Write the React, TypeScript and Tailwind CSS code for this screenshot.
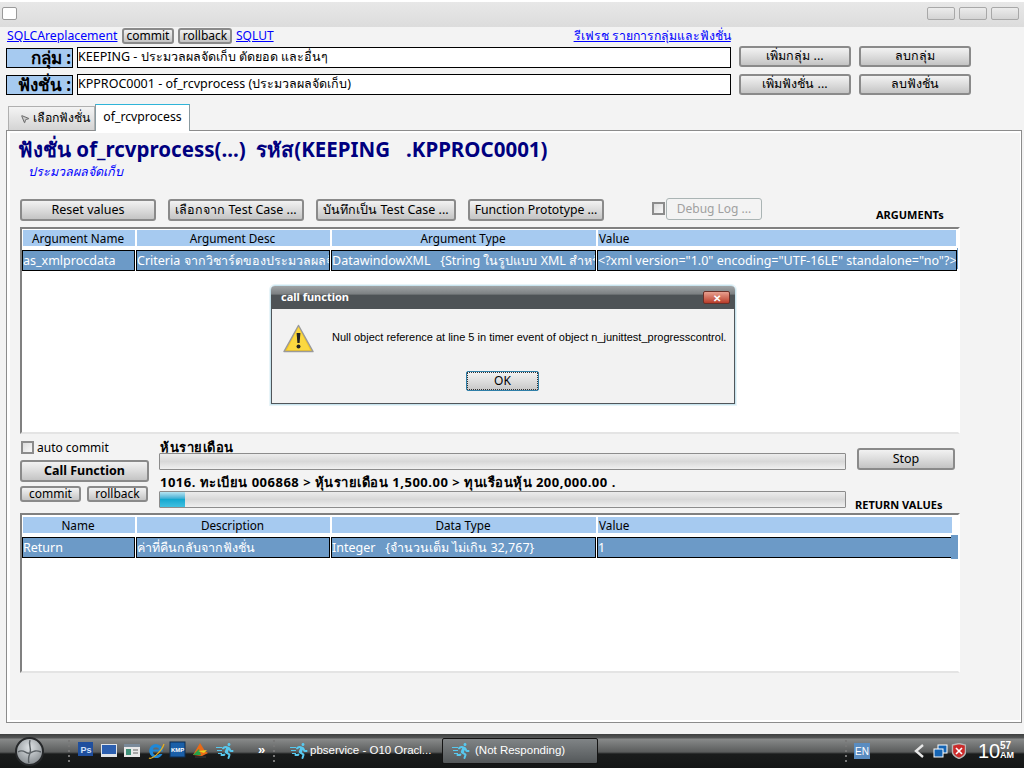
import type { ReactNode } from "react";
import { MousePointer2 } from "lucide-react";
import { FaRunning } from "react-icons/fa";

const Btn = ({ className = "", children }: { className?: string; children: ReactNode }) => (
  <button className={`flex items-center justify-center whitespace-nowrap rounded-[3px] border-2 border-[#8a8a8a] bg-gradient-to-b from-[#f2f2f2] via-[#dcdcdc] to-[#c4c4c4] leading-none text-black ${className}`}>
    {children}
  </button>
);

const Check = ({ className = "" }: { className?: string }) => (
  <span className={`block h-[13px] w-[13px] border-2 border-[#8c8c8c] bg-gradient-to-br from-[#dcdcdc] to-[#f8f8f8] ${className}`} />
);

const Bar = ({ fill = 0 }: { fill?: number }) => (
  <div className="relative h-[17px] w-[687px] overflow-hidden rounded-[1px] border border-[#8c8c8c] bg-gradient-to-b from-[#ececec] via-[#d8d8d8] to-[#f0f0f0]">
    {fill > 0 && (
      <div
        className="h-full bg-gradient-to-b from-[#b5e4f2] via-[#12a8d0] to-[#3fc0e0]"
        style={{ width: fill }}
      />
    )}
  </div>
);

const Head = ({ w, left, children }: { w: string; left?: boolean; children: ReactNode }) => (
  <div className={`flex h-[16px] items-center bg-[#a6caf0] pt-px text-[11.75px] text-black ${left ? "pl-px" : "justify-center pr-[2px]"} ${w}`}>
    {children}
  </div>
);

const Cell = ({ w, children }: { w: string; children: ReactNode }) => (
  <div className={`h-[21px] overflow-hidden whitespace-pre border border-black bg-[#6c9ac7] text-[12.5px] leading-[19px] text-white ${w}`}>
    {children}
  </div>
);

const DataTable = ({
  className,
  heads,
  cells,
  scroll,
}: {
  className: string;
  heads: string[];
  cells: string[];
  scroll?: boolean;
}) => (
  <div className={`relative ml-[10px] w-[940px] shrink-0 border-2 border-b-[#e4e4e4] border-l-[#808080] border-r-[#fff] border-t-[#808080] bg-white pl-[1px] ${className}`}>
    <div className="flex gap-[2px]">
      <Head w="w-[112px]">{heads[0]}</Head>
      <Head w="w-[193px]">{heads[1]}</Head>
      <Head w="w-[264px]">{heads[2]}</Head>
      <Head w={scroll ? "w-[354px]" : "w-[358px]"} left>
        {heads[3]}
      </Head>
    </div>
    <div className="-ml-px mt-[4px] flex gap-[1px] bg-white">
      <Cell w="w-[113px]">{cells[0]}</Cell>
      <Cell w="w-[194px]">{cells[1]}</Cell>
      <Cell w="w-[265px]">{cells[2]}</Cell>
      <Cell w={scroll ? "w-[355px]" : "w-[360px]"}>{cells[3]}</Cell>
    </div>
    {scroll ? (
      <div className="absolute right-0 top-[20px] h-[24px] w-[7px] bg-[#6c9ac7]" />
    ) : (
      <div className="absolute right-0 top-[19px] h-[21px] w-[1px] bg-[#6c9ac7]" />
    )}
  </div>
);

const Runner = ({ className = "" }: { className?: string }) => (
  <span className={`relative block h-[16px] w-[18px] shrink-0 ${className}`}>
    <FaRunning className="absolute right-0 top-0 h-[16px] w-[14px] text-[#58c8ee]" />
    <span className="absolute left-0 top-[4px] h-px w-[6px] bg-[#58c8ee]" />
    <span className="absolute left-[1px] top-[7px] h-px w-[5px] bg-[#58c8ee]" />
    <span className="absolute left-[2px] top-[10px] h-px w-[4px] bg-[#58c8ee]" />
  </span>
);

const Grip = ({ className = "" }: { className?: string }) => (
  <span className={`block h-[22px] w-[2px] shrink-0 bg-[repeating-linear-gradient(to_bottom,#777_0,#777_2px,transparent_2px,transparent_5px)] ${className}`} />
);

export default function App() {
  return (
    <div className="relative flex h-[768px] w-[1024px] flex-col overflow-hidden bg-[#f3f3f3] font-['Tahoma','Noto_Sans',sans-serif] text-black">
      {/* title bar */}
      <div className="flex h-[27px] shrink-0 items-center justify-between border-t-2 border-t-white bg-gradient-to-b from-[#e8e8e8] to-[#dcdcdc] pb-[2px] pl-[2px] pr-[5px]">
        <span className="block h-[13px] w-[15px] rounded-[2px] border border-[#9a9a9a] bg-white" />
        <div className="flex gap-[4px]">
          <span className="block h-[13px] w-[28px] rounded-[2px] border border-[#a8a8a8] bg-gradient-to-b from-[#ececec] to-[#d4d4d4]" />
          <span className="block h-[13px] w-[28px] rounded-[2px] border border-[#a8a8a8] bg-gradient-to-b from-[#ececec] to-[#d4d4d4]" />
          <span className="block h-[13px] w-[28px] rounded-[2px] border border-[#a8a8a8] bg-gradient-to-b from-[#ececec] to-[#d4d4d4]" />
        </div>
      </div>

      {/* link row */}
      <div className="relative mt-px flex h-[16px] items-center pl-[7px] text-[12px]">
        <a className="w-[115px] text-[12.25px] text-[#0000ff] underline">SQLCAreplacement</a>
        <Btn className="h-[16px] w-[52px] text-[12px]">commit</Btn>
        <Btn className="ml-[4px] h-[16px] w-[54px] text-[12px]">rollback</Btn>
        <a className="ml-[4px] text-[#0000ff] underline">SQLUT</a>
        <a className="ml-[300px] whitespace-nowrap text-[12.25px] text-[#0000ff] underline">รีเฟรช รายการกลุ่มและฟังชั่น</a>
      </div>

      {/* group row */}
      <div className="mt-[2px] flex h-[22px] pl-[6px]">
        <div className="mt-[2px] flex h-[20px] w-[67px] items-center justify-end border border-black bg-[#a6caf0] pr-[1px] text-[17px] font-bold">กลุ่ม :</div>
        <div className="ml-[4px] mt-px h-[21px] w-[654px] border border-black bg-white text-[12.5px] leading-[18px]">KEEPING - ประมวลผลจัดเก็บ ตัดยอด และอื่นๆ</div>
        <Btn className="ml-[8px] h-[21px] w-[112px] text-[12.5px]">เพิ่มกลุ่ม ...</Btn>
        <Btn className="ml-[8px] h-[21px] w-[112px] text-[12.5px]">ลบกลุ่ม</Btn>
      </div>

      {/* function row */}
      <div className="mt-[6px] flex h-[22px] pl-[6px]">
        <div className="mt-[1px] flex h-[20px] w-[67px] items-center justify-end border border-black bg-[#a6caf0] pr-[1px] text-[17px] font-bold">ฟังชั่น :</div>
        <div className="ml-[4px] h-[21px] w-[654px] border border-black bg-white text-[12.5px] leading-[18px]">KPPROC0001 - of_rcvprocess (ประมวลผลจัดเก็บ)</div>
        <Btn className="ml-[8px] h-[21px] w-[112px] text-[12.5px]">เพิ่มฟังชั่น ...</Btn>
        <Btn className="ml-[8px] h-[21px] w-[112px] text-[12.5px]">ลบฟังชั่น</Btn>
      </div>

      {/* tabs */}
      <div className="mt-[8px] flex h-[26px] items-end pl-[8px] text-[12.5px]">
        <div className="flex h-[24px] w-[87px] items-center gap-[3px] border border-b-0 border-[#b0b0b0] bg-gradient-to-b from-[#f4f4f4] to-[#d4d4d4] pl-[11px]">
          <MousePointer2 className="h-[10px] w-[10px] shrink-0 fill-[#ccc] text-[#555]" />
          <span className="whitespace-nowrap text-[12.25px]">เลือกฟังชั่น</span>
        </div>
        <div className="z-10 -mb-px flex h-[27px] w-[95px] items-center justify-center border border-b-0 border-[#8a9aa0] border-t-[#2fb4d8] bg-white pb-[2px] text-[12.25px]">of_rcvprocess</div>
      </div>

      {/* tab page */}
      <div className="ml-[6px] flex h-[593px] w-[1016px] flex-col border border-[#8c8c8c]">
        <div className="flex flex-1 flex-col border-b-[2px] border-l-[3px] border-r border-t-[2px] border-white">
          <div className="ml-[8px] mt-[3px] whitespace-pre text-[20.5px] font-bold leading-[26px] text-[#00007f]">ฟังชั่น of_rcvprocess(...)  รหัส(KEEPING   .KPPROC0001)</div>
          <div className="ml-[18px] mt-[2px] text-[12.5px] italic leading-[16px] text-[#0000ff]">ประมวลผลจัดเก็บ</div>

          {/* toolbar */}
          <div className="ml-[10px] mt-[18px] flex h-[23px] items-start">
            <Btn className="mt-px h-[22px] w-[136px] text-[12.5px]">Reset values</Btn>
            <Btn className="ml-[12px] mt-px h-[22px] w-[136px] text-[12.5px]">เลือกจาก Test Case ...</Btn>
            <Btn className="ml-[12px] mt-px h-[22px] w-[140px] text-[12.5px]">บันทึกเป็น Test Case ...</Btn>
            <Btn className="ml-[12px] mt-px h-[22px] w-[136px] text-[12.25px]">Function Prototype ...</Btn>
            <Check className="ml-[48px] mt-[4px]" />
            <button className="ml-px h-[22px] w-[96px] rounded-[3px] border border-[#aab4b4] text-[12px] text-[#a0a0a0]">Debug Log ...</button>
            <span className="ml-[114px] mt-[10px] text-[11px] font-bold leading-[13px]">ARGUMENTs</span>
          </div>

          <DataTable
            className="mt-[6px] h-[207px] pt-[1px]"
            heads={["Argument Name", "Argument Desc", "Argument Type", "Value"]}
            cells={[
              "as_xmlprocdata",
              "Criteria จากวิชาร์ดของประมวลผลจัดเก็บ",
              "DatawindowXML   {String ในรูปแบบ XML สำหรับ",
              '<?xml version="1.0" encoding="UTF-16LE" standalone="no"?>',
            ]}
          />

          {/* progress area */}
          <div className="ml-[10px] mt-[7px] flex h-[72px] shrink-0">
            <div className="w-[129px]">
              <div className="flex h-[13px] items-center gap-[3px] pl-px text-[12px]">
                <Check />
                auto commit
              </div>
              <Btn className="mt-[6px] h-[22px] w-[129px] text-[12.5px] font-bold">Call Function</Btn>
              <div className="mt-[4px] flex justify-between pr-px">
                <Btn className="h-[16px] w-[61px] text-[12px]">commit</Btn>
                <Btn className="h-[16px] w-[61px] text-[12px]">rollback</Btn>
              </div>
            </div>
            <div className="ml-[10px]">
              <div className="pl-px text-[13px] font-bold leading-[12px] tracking-[0.5px]">หุ้นรายเดือน</div>
              <Bar />
              <div className="mt-[3px] h-[18px] whitespace-pre pl-[1px] text-[13px] font-bold leading-[18px] tracking-[0.5px]">1016. ทะเบียน 006868 &gt; หุ้นรายเดือน 1,500.00 &gt; ทุนเรือนหุ้น 200,000.00 .</div>
              <Bar fill={25} />
            </div>
            <div className="ml-[11px] flex w-[98px] flex-col">
              <Btn className="mt-[7px] h-[22px] w-[98px] text-[12.5px]">Stop</Btn>
              <span className="-ml-[2px] mt-[28px] whitespace-nowrap text-[11px] font-bold leading-[13px]">RETURN VALUEs</span>
            </div>
          </div>

          <DataTable
            className="h-[160px] pt-[2px]"
            heads={["Name", "Description", "Data Type", "Value"]}
            cells={["Return", "ค่าที่คืนกลับจากฟังชั่น", "Integer   {จำนวนเต็ม ไม่เกิน 32,767}", "1"]}
            scroll
          />
        </div>
      </div>

      {/* taskbar */}
      <div className="absolute bottom-0 left-0 flex h-[34px] w-[1024px] items-center bg-[linear-gradient(to_bottom,#3e4040_0px,#555757_4px,#888a8a_5px,#5a5c5c_18px,#1a1c1c_20px,#141616_34px)] font-['Liberation_Sans',sans-serif] text-[11.5px] text-white">
        <svg className="ml-[15px] shrink-0" width="29" height="29" viewBox="0 0 29 29">
          <defs>
            <radialGradient id="orb" cx="50%" cy="35%" r="70%">
              <stop offset="0%" stopColor="#dfe3e6" />
              <stop offset="100%" stopColor="#7e8488" />
            </radialGradient>
          </defs>
          <circle cx="14.5" cy="14.5" r="13.5" fill="url(#orb)" stroke="#26282a" strokeWidth="2" />
          <path d="M3 15c6-4 8 3 12 1s6-3 11-1M15 3c-2 6 2 8 0 13s-2 7-1 10" fill="none" stroke="#5a6064" strokeWidth="1.4" />
        </svg>
        <Grip className="ml-[24px]" />
        <svg className="ml-[8px] shrink-0" width="137" height="20" viewBox="0 0 137 20">
          <rect x="0" y="1" width="15" height="14" fill="#1f4f9e" />
          <text x="2.5" y="12" fontSize="9" fontWeight="bold" fill="#cfe0f8">Ps</text>
          <rect x="23" y="3" width="16" height="13" fill="#dfe3e8" />
          <rect x="24" y="4" width="14" height="9" fill="#2b5fb0" />
          <rect x="46" y="3" width="16" height="13" fill="#e8e8e8" />
          <rect x="46" y="3" width="16" height="3" fill="#7a8a9a" />
          <rect x="48" y="8" width="5" height="6" fill="#3f8f78" />
          <path d="M55 9h5M55 12h5" stroke="#666" />
          <path d="M78 3a7 7 0 1 0 6.5 10h-3.2a3.8 3.8 0 0 1-6.6-2.5h10A7 7 0 0 0 78 3zm-3.3 5.5a3.5 3.5 0 0 1 6.6 0z" fill="#1e88d8" />
          <path d="M71 17c3 2 13-7 15-14" fill="none" stroke="#e8b020" strokeWidth="1.2" />
          <rect x="92" y="1" width="15" height="15" fill="#1a5fa8" stroke="#0c2c50" />
          <text x="93" y="11" fontSize="6" fontWeight="bold" fill="#fff">KMP</text>
          <path d="M115 14l7-12 5 8 3 2-6 3z" fill="#e86a18" />
          <path d="M115 14l6-6 2 6z" fill="#28a048" />
          <path d="M120 10l9-1-3 3z" fill="#e8d020" />
          <path d="M117 16h11" stroke="#333" strokeWidth="1.5" />
        </svg>
        <Runner className="ml-[1px]" />
        <span className="ml-[24px] mt-[-4px] w-[15px] shrink-0 text-[13px] font-bold leading-none">»</span>
        <Grip />
        <Runner className="ml-[15px]" />
        <span className="ml-[2px] w-[130px] shrink-0 whitespace-nowrap">pbservice - O10 Oracl...</span>
        <div className="ml-[2px] flex h-[26px] w-[156px] shrink-0 items-center rounded-[2px] border border-[#141414] bg-gradient-to-b from-[#808486] to-[#54585a] pl-[9px]">
          <Runner />
          <span className="ml-[5px] whitespace-nowrap">(Not Responding)</span>
        </div>
        <Grip className="ml-[247px]" />
        <span className="ml-[7px] flex h-[16px] w-[16px] shrink-0 items-center justify-center bg-[#5a8cc0] text-[10px]">EN</span>
        <svg className="ml-[44px] shrink-0" width="52" height="16" viewBox="0 0 52 16">
          <path d="M9 2L2 8l7 6" fill="none" stroke="#e8e8e8" strokeWidth="2.4" />
          <rect x="24" y="2" width="9" height="8" fill="#1464b4" stroke="#fff" />
          <rect x="20" y="6" width="9" height="8" fill="#1464b4" stroke="#fff" />
          <path d="M38.5 2l6.5-1.5L51.5 2v7c0 3-3 5-6.5 6.5C41.5 14 38.5 12 38.5 9z" fill="#cc2a2a" stroke="#b8b8b8" strokeWidth="1.4" />
          <path d="M42 5l6 6M48 5l-6 6" stroke="#fff" strokeWidth="1.6" />
        </svg>
        <span className="ml-[12px] w-[22px] shrink-0 text-[20px] leading-none">10</span>
        <span className="mb-[2px] flex flex-col font-bold">
          <span className="text-[10px] leading-[10px]">57</span>
          <span className="text-[9px] leading-[9px]">AM</span>
        </span>
      </div>

      {/* message box */}
      <div className="absolute left-[270px] top-[285px] w-[466px] rounded-t-[5px] border border-[#c8e4ee] shadow-[0_0_0_1px_#e8f4f8]">
        <div className="flex h-[23px] items-center justify-between rounded-t-[4px] bg-[linear-gradient(to_bottom,#a0a4a6_0%,#7c8082_35%,#4e5356_40%,#4e5356_100%)] pl-[10px] pr-[5px]">
          <span className="text-[11px] font-bold text-white">call function</span>
          <span className="flex h-[13px] w-[27px] items-center justify-center rounded-[2px] border border-[#6a3028] bg-gradient-to-b from-[#e8a090] to-[#b83a28] text-[10px] font-bold leading-none text-white">✕</span>
        </div>
        <div className="flex h-[95px] flex-col border border-t-0 border-[#50565a] bg-[#f2f2f2]">
          <div className="mt-[15px] flex items-center pl-[11px]">
            <svg className="shrink-0" width="31" height="29" viewBox="0 0 31 29">
              <path d="M15.5 1.5L30 27.5H1z" fill="#f6c820" stroke="#9a9a9a" strokeWidth="1.5" strokeLinejoin="round" />
              <path d="M15.5 3L4 26h23z" fill="#fbd840" />
              <path d="M13.6 9h3.8l-.8 10h-2.2z" fill="#222" />
              <circle cx="15.5" cy="22.5" r="2" fill="#222" />
            </svg>
            <span className="mb-[2px] ml-[18px] whitespace-nowrap font-['Liberation_Sans',sans-serif] text-[11px]">Null object reference at line 5 in timer event of object n_junittest_progresscontrol.</span>
          </div>
          <button className="ml-[194px] mt-[18px] flex h-[20px] w-[73px] items-center justify-center rounded-[2px] border border-[#2f7fa8] bg-gradient-to-b from-[#f4f4f4] to-[#c8c8c8] text-[12px] outline-1 -outline-offset-2 outline-dotted outline-[#333]">OK</button>
        </div>
      </div>
    </div>
  );
}
